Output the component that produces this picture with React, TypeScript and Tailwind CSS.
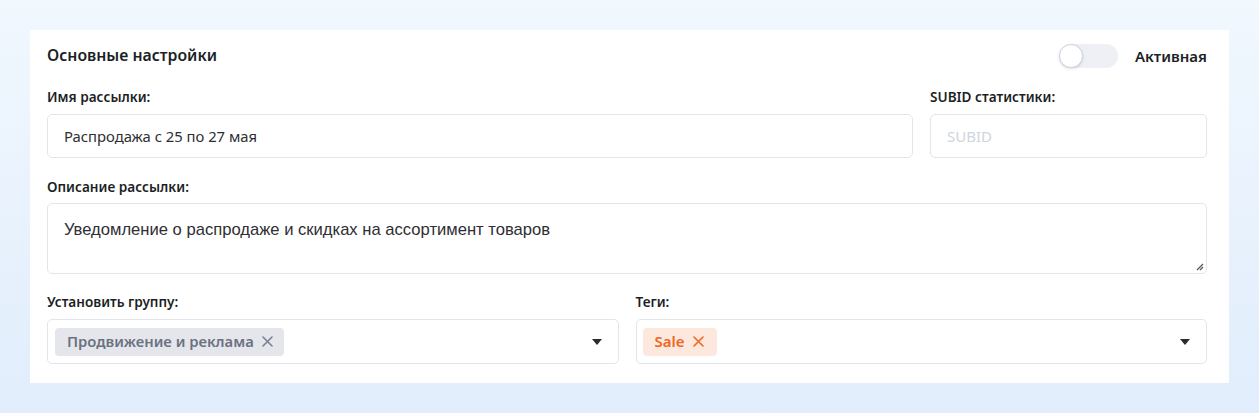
import React from "react";

const font = { fontFamily: '"Noto Sans", "Open Sans", sans-serif' };

function Caret() {
  return (
    <svg width="10" height="6" viewBox="0 0 10 6" className="shrink-0">
      <path d="M0 0 L10 0 L5 6 Z" fill="#2b2b2b" />
    </svg>
  );
}

function X({ color }: { color: string }) {
  return (
    <svg width="11" height="11" viewBox="0 0 11 11" className="shrink-0">
      <path d="M1 1 L10 10 M10 1 L1 10" stroke={color} strokeWidth="1.6" strokeLinecap="round" />
    </svg>
  );
}

export default function App() {
  return (
    <div
      className="w-[1259px] h-[413px] pt-[30px] px-[30px] bg-gradient-to-b from-[#f1f8fe] to-[#e1edfc]"
      style={font}
    >
      <div className="bg-white h-[353px] pl-[17px] pr-[22px] pt-[14px] flex flex-col">
        <div className="flex items-center h-[24px]">
          <div className="flex-1 text-[15.8px] font-semibold text-[#1c1f26]">Основные настройки</div>
          <div className="w-[59px] h-[24px] rounded-full bg-[#eef0f5] relative">
            <div className="absolute left-0 top-0 w-[24px] h-[24px] rounded-full bg-white border-[1.5px] border-[#cdd4e2] shadow-sm" />
          </div>
          <div className="ml-[17px] text-[15px] font-semibold text-[#1c1f26]">Активная</div>
        </div>

        <div className="flex gap-[17px] mt-[20px]">
          <div className="flex-1 flex flex-col">
            <div className="text-[13.6px] font-semibold text-[#1c1f26] h-[18px] leading-[18px]">Имя рассылки:</div>
            <div className="mt-[8px] h-[44px] border border-[#e3e5ec] rounded-[5px] flex items-center px-[16px] text-[14.8px] text-[#2e2e33]">
              Распродажа с 25 по 27 мая
            </div>
          </div>
          <div className="w-[277px] flex flex-col">
            <div className="text-[13.6px] font-semibold text-[#1c1f26] h-[18px] leading-[18px]">SUBID статистики:</div>
            <div className="mt-[8px] h-[44px] border border-[#e3e5ec] rounded-[5px] flex items-center px-[16px] text-[15px] text-[#cfd5e0]">
              SUBID
            </div>
          </div>
        </div>

        <div className="mt-[20px] text-[13.6px] font-semibold text-[#1c1f26] h-[18px] leading-[18px]">Описание рассылки:</div>
        <div className="mt-[7px] h-[71px] border border-[#e3e5ec] rounded-[5px] relative px-[16px] pt-[14px]">
          <div className="text-[16.6px] text-[#2e2e33]" style={{ fontFamily: '"Liberation Sans", Arial, sans-serif' }}>
            Уведомление о распродаже и скидках на ассортимент товаров
          </div>
          <svg width="8" height="8" viewBox="0 0 8 8" className="absolute right-[2px] bottom-[2px]">
            <path d="M7 1 L1 7 M7 4 L4 7" stroke="#555" strokeWidth="1.2" />
          </svg>
        </div>

        <div className="flex gap-[17px] mt-[19px]">
          <div className="flex-1 flex flex-col">
            <div className="text-[13.6px] font-semibold text-[#1c1f26] h-[18px] leading-[18px]">Установить группу:</div>
            <div className="mt-[8px] h-[45px] border border-[#e3e5ec] rounded-[5px] flex items-center pl-[7px] pr-[16px]">
              <div className="h-[28px] rounded-[4px] bg-[#e4e6eb] flex items-center gap-[8px] pl-[12px] pr-[11px] text-[14.8px] font-semibold text-[#6b7180]">
                Продвижение и реклама
                <X color="#7b8190" />
              </div>
              <div className="flex-1" />
              <Caret />
            </div>
          </div>
          <div className="flex-1 flex flex-col">
            <div className="text-[13.6px] font-semibold text-[#1c1f26] h-[18px] leading-[18px]">Теги:</div>
            <div className="mt-[8px] h-[45px] border border-[#e3e5ec] rounded-[5px] flex items-center pl-[6px] pr-[16px]">
              <div className="h-[28px] rounded-[4px] bg-[#fde8dd] flex items-center gap-[8px] pl-[12px] pr-[13px] text-[15px] font-semibold text-[#f0651f]">
                Sale
                <X color="#f0651f" />
              </div>
              <div className="flex-1" />
              <Caret />
            </div>
          </div>
        </div>
      </div>
    </div>
  );
}
